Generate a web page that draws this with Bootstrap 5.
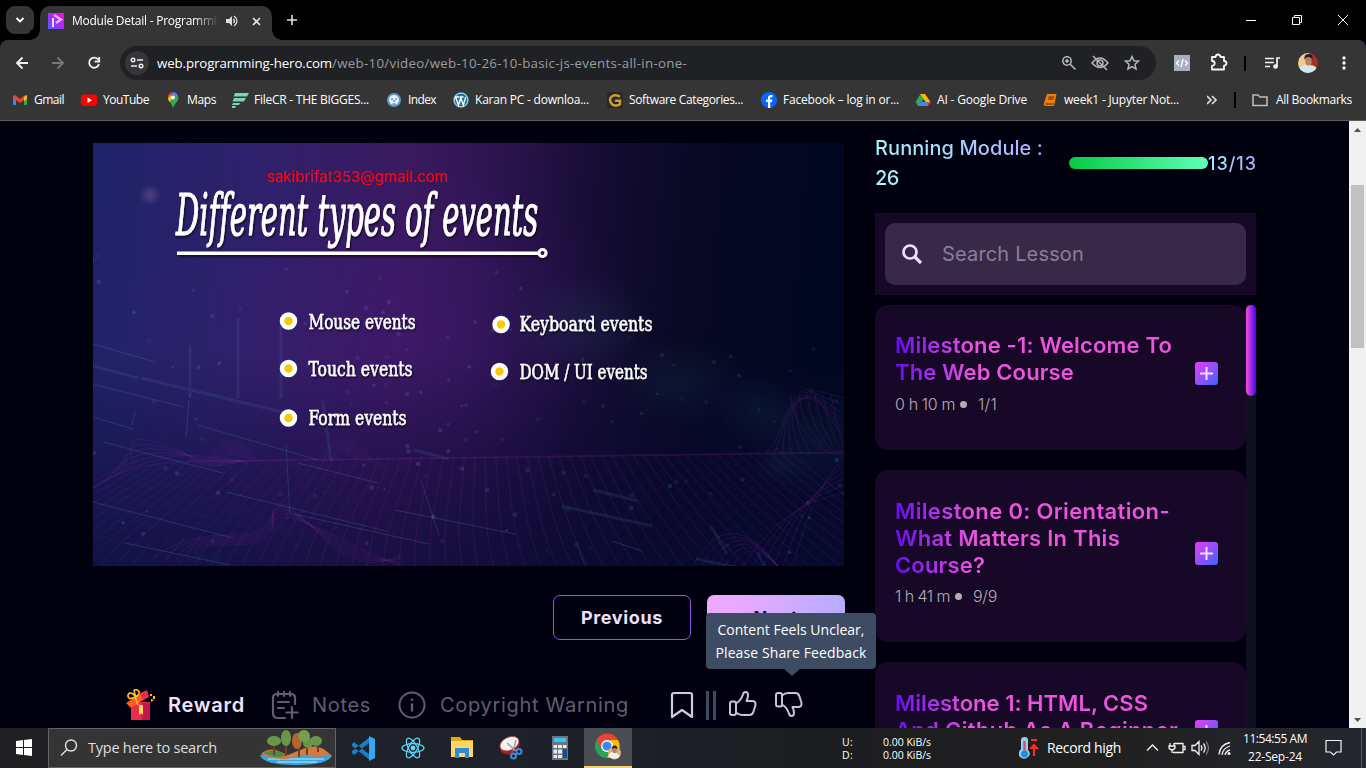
<!DOCTYPE html>
<html lang="en">
<head>
<meta charset="utf-8">
<meta name="viewport" content="width=device-width, initial-scale=1">
<title>Module Detail - Programming Hero</title>
<link href="https://cdn.jsdelivr.net/npm/bootstrap@5.3.0/dist/css/bootstrap.min.css" rel="stylesheet">
<style>
html,body{height:100%;overflow:hidden}
body{background:#00000f;font-family:"Open Sans","Noto Sans",sans-serif;font-size:12px;line-height:16px;color:#fff}
svg{display:block;flex:none}
[data-w]{white-space:nowrap;display:inline-block}
.screen{width:1366px;height:768px}
.tabstrip{height:40px;background:#000}
.tabsearch{width:28px;height:28px;margin:6px 0 0 6px;border-radius:9px;background:#353535}
.tab-on{width:232px;height:34px;margin-top:6px;margin-left:6px;padding-left:8px;background:#353535;border-radius:10px 10px 0 0;position:relative}
.tab-on::before,.tab-on::after{content:"";position:absolute;bottom:0;width:10px;height:10px}
.tab-on::before{left:-10px;background:radial-gradient(circle at 0 0,#000 9.5px,#353535 10px)}
.tab-on::after{right:-10px;background:radial-gradient(circle at 100% 0,#000 9.5px,#353535 10px)}
.tab-label{width:147px;overflow:hidden;white-space:nowrap;-webkit-mask-image:linear-gradient(90deg,#000 83%,transparent)}
.win-ctl{width:46px}
.toolbar{height:46px;background:#353535;border-radius:8px 8px 0 0}
.omnibox{width:1036px;height:34px;border-radius:17px;background:#202124;margin-left:15px}
.site-btn{width:24px;height:24px;border-radius:50%;background:#353638;margin-left:5px}
.url{font-size:13.3px;color:#9b9da0;margin-left:8px}
.url b{font-weight:400;color:#fff}
.bookbar{height:35px;background:#353535;border-bottom:1px solid #5e5e5e;padding-left:12px}
.marks{display:grid;grid-template-columns:69px 84px 67px 154px 67px 154px 154px 154px 127px 157px}
.marks>div{display:flex;align-items:center;gap:6px;height:28px}
.viewport{height:607px;overflow:hidden;background:#00000f}
.page{width:1349px;padding-left:93px;font-family:Inter,"Liberation Sans",sans-serif}
.watch{width:752px;padding-top:22px}
.slide{width:751px;height:423px}
.btn-hero{width:138px;height:45px;border-radius:7px;font-weight:700;font-size:18px;padding:0}
.btn-prev{border:1px solid #9455e8;color:#efe0ff}
.btn-next{background:linear-gradient(90deg,#eaaaff 20%,#b5acff);color:#0b0720;border:0}
.actions{height:34px;margin-top:48px;padding-left:32px;font-size:20px;line-height:30px;color:#655c71}
.actions .on{color:#f0e1ff;font-weight:600}
.tip-wrap{position:relative}
.tip{position:absolute;z-index:5;width:170px;height:56px;left:-68px;top:-77px;background:#3d4b63;border-radius:4px;padding:5px 0;text-align:center;font:14px/23px "Open Sans",sans-serif;color:#fff}
.tip::after{content:"";position:absolute;left:78px;top:56px;border:8px solid transparent;border-top:7px solid #3d4b63;border-bottom:0}
.side{width:381px;margin-left:30px;padding-top:12px}
.ice{background:linear-gradient(90deg,#a4f8fa,#b2acff);-webkit-background-clip:text;background-clip:text;color:transparent}
.module-name{font-size:20px;line-height:30px;width:172px;font-weight:500}
.module-name .short{background-size:168px 100%}
.done-bar{width:139px;height:12px;border-radius:6px;background:linear-gradient(90deg,#05cb41,#5fffb8)}
.count{font-size:18px;line-height:24px;font-weight:500;width:48px;padding-top:2px}
.finder{height:82px;margin-top:20px;padding:10px;background:#170827}
.finder-in{height:62px;border-radius:10px;background:#382949;color:#8b7d98;font-size:20px;padding-left:17px}
.lessons{margin-top:10px;height:500px}
.lessons-list{width:371px;gap:20px}
.mile{background:#170827;border-radius:13px;padding:28px 28px 34px 20px}
.mile:first-child{padding-top:27px}
.mile h3{font-size:22px;line-height:27px;font-weight:600;margin:0;background:linear-gradient(90deg,#650df5,#ee54df 78px);-webkit-background-clip:text;background-clip:text;color:transparent}
.mile h3 span{display:table}
.mile p{font-size:16px;line-height:24px;margin:5px 0 0;font-weight:300;color:#b3adb4}
.mile:first-child p{margin-top:6px}
.mile i{width:7px;height:7px;border-radius:50%;background:#b3adb4;margin:1px 11px 0 5px}
.plus{width:23px;height:23px;border-radius:3px;background:linear-gradient(135deg,#e43df5,#4361ff);margin-bottom:2px}
.track{width:10px;background:#101020}
.track div{height:91px;border-radius:5px;background:linear-gradient(90deg,#f050dd,#5000ee)}
.sb{width:17px;background:#f1f1f1}
.sb div{width:13px;height:163px;background:#c1c1c1;margin:48px 2px 0}
.taskbar{height:40px;background:linear-gradient(90deg,#202022,#1f222c 35%,#1c1d20 60%,#202020 80%,#24272e)}
.tasksearch{width:288px;height:40px;background:#343434;border:1px solid #636363;font-size:14.5px;color:#dedede;padding-left:11px}
.task{width:49px;height:40px}
.task.cur{background:#4b4c51;border-bottom:2px solid #f5d37a;width:48px}
.net{font-size:10.5px;line-height:13px;padding-top:2px}
.clock{font-size:12px;line-height:18px;width:66px;margin-left:6px}
</style>
</head>
<body>
<div class="screen d-flex flex-column">
  <header>
    <div class="tabstrip d-flex">
      <div class="tabsearch d-flex align-items-center justify-content-center"><svg width="10" height="8" viewBox="0 0 10 8" fill="none" stroke="#fff" stroke-width="1.8"><path d="M1.5 2 5 5.5 8.5 2"/></svg></div>
      <div class="tab-on d-flex align-items-center pb-1">
        <svg width="16" height="16" viewBox="0 0 16 16"><defs><linearGradient id="ph" x1="0" y1="1" x2="1" y2="0"><stop stop-color="#5460ff"/><stop offset=".5" stop-color="#a42bff"/><stop offset="1" stop-color="#ff08dd"/></linearGradient></defs><path fill="url(#ph)" d="M0 0h16v16H0z"/><path d="m6 2 7 4.5L8 10" fill="none" stroke="#e8b7ff" stroke-width="2.3"/><path d="M4 5h2v9H4z" fill="#eadcff"/></svg>
        <div class="tab-label ms-2"><span data-w="158">Module Detail - Programming</span></div>
        <svg style="margin-left:7px" width="13" height="12" viewBox="0 0 13 12" fill="none" stroke="#ddd" stroke-width="1.3"><path d="M0 4h3l3-3v10L3 8H0z" fill="#ddd" stroke="none"/><path d="M7.5 4q2 2 0 4M8 1q6 5 0 10"/></svg>
        <svg style="margin-left:13px" width="9" height="9" viewBox="0 0 9 9" stroke="#e4e4e4" stroke-width="1.6"><path d="m1 1 7 7M8 1 1 8"/></svg>
      </div>
      <svg style="margin:15px 0 0 15px" width="11" height="11" viewBox="0 0 11 11" stroke="#e4e4e4" stroke-width="1.6"><path d="M5 0v10M0 5h10"/></svg>
      <div class="ms-auto d-flex align-items-center">
        <div class="win-ctl d-flex justify-content-center"><svg width="10" height="10"><path d="M0 5.5h10" stroke="#fff"/></svg></div>
        <div class="win-ctl d-flex justify-content-center"><svg width="10" height="10" fill="none" stroke="#fff"><path d="M.5 2.5h7v7h-7zM2.500 2V.5h7v7H8"/></svg></div>
        <div class="win-ctl d-flex justify-content-center"><svg width="10" height="10" stroke="#fff"><path d="m0 0 10 10M10 0 0 10"/></svg></div>
      </div>
    </div>
    <div class="toolbar d-flex align-items-center">
      <svg style="margin-left:15px" width="90" height="16" viewBox="0 0 90 16" fill="none" stroke="#f3f3f3" stroke-width="1.8"><path d="M13 8H2M7.5 2.5 2 8l5.500 5.500"/><path stroke="#777" d="M37 8h11M42.500 2.500 48 8l-5.500 5.500"/><path d="M83 4.500A5 5 0 1 0 84 9M84.200 2v4.500h-4.500"/></svg>
      <div class="omnibox d-flex align-items-center">
        <div class="site-btn d-flex align-items-center justify-content-center"><svg width="14" height="14" viewBox="0 0 14 14" fill="none" stroke="#eee" stroke-width="1.4"><circle cx="3" cy="4" r="1.800"/><path d="M7 4h6M1 10h6"/><circle cx="11" cy="10" r="1.800"/></svg></div>
        <div class="url"><b data-w="175">web.programming-hero.com</b><span data-w="355">/web-10/video/web-10-26-10-basic-js-events-all-in-one-</span></div>
        <svg class="ms-auto" style="margin-right:14px" width="80" height="18" viewBox="0 0 80 18" fill="none" stroke="#b5b6b9" stroke-width="1.500"><circle cx="5" cy="7" r="4.200"/><path d="m8 10 5.500 5.500M3 7h4M5 5v4"/><path d="M30 9q8-10 16 0-8 9-16 0ZM31 2l14 14"/><circle cx="38" cy="9" r="3"/><path d="m70 2.500 1.900 4.300 4.600.4-3.500 3.100 1 4.600-4-2.400-4 2.400 1-4.600-3.500-3.100 4.600-.4z"/></svg>
      </div>
      <svg style="margin-left:18px" width="192" height="24" viewBox="0 0 192 24" fill="none"><path fill="#a9b0bf" d="M0 4h16v16H0z"/><path d="M5 9.500 2.500 12 5 14.500M11 9.500l2.500 2.500-2.500 2.500M9 8l-2 8" stroke="#fff" stroke-width="1.300"/><path d="M38 6h3.500q.5-2.500 2.500-2.500T46.500 6H50v4q2.500.3 2.500 2.300T50 14.600V18.500H38V15q2.700-.5 2.700-2.700T38 10z" stroke="#f5f5f5" stroke-width="1.800" stroke-linejoin="round"/><path d="M71 5v15" stroke="#000" stroke-width="2"/><path d="M91 7.500h9M91 11.500h9M91 15.500h5M103 16V7h3" stroke="#f5f5f5" stroke-width="1.700"/><circle cx="101.500" cy="15.500" r="2.300" fill="#f5f5f5"/><clipPath id="av"><circle cx="134" cy="12" r="10"/></clipPath><g clip-path="url(#av)"><path fill="#f1cd91" d="M124 2h12v20h-12z"/><path fill="#aa3024" d="M135 2h10v20h-10z"/><path d="M124 23q0-10 10-9 10-1 10 9z" fill="#d3e6ef"/><ellipse cx="134.500" cy="10" rx="3.200" ry="4.500" fill="#b48266"/><path d="M130.500 9q-1-6 4-6t4 6q-1-3-4-3t-4 3" fill="#211d20"/></g><g fill="#f5f5f5"><circle cx="170" cy="7" r="1.700"/><circle cx="170" cy="12" r="1.700"/><circle cx="170" cy="17" r="1.700"/></g></svg>
    </div>
    <div class="bookbar d-flex">
      <div class="marks">
        <div><svg width="16" height="16" viewBox="0 0 16 16"><path fill="#4285f4" d="M1 4h3v9H2q-1 0-1-1z"/><path fill="#34a853" d="M12 4h3v8q0 1-1 1h-2z"/><path fill="#ea4335" d="m1 4 2-1 5 4 5-4 2 1v2l-7 5-7-5z"/><path fill="#fbbc04" d="M12 5l3-2v4l-3 2z"/></svg><span data-w="30">Gmail</span></div>
        <div><svg width="16" height="16" viewBox="0 0 16 16"><rect y="2.500" width="16" height="11.500" rx="3" fill="#f00"/><path fill="#fff" d="m6.500 5.500 4.500 2.700-4.500 2.700z"/></svg><span data-w="46">YouTube</span></div>
        <div><svg width="16" height="16" viewBox="0 0 16 16"><path fill="#34a853" d="M8 16Q7 12 4 9l7-7q4 3 1.500 7Q9 13 8 16"/><path fill="#4285f4" d="M5 9 13 3q-2-3-5-3L3 6z"/><path fill="#ea4335" d="M3.300 3Q5 .500 8 0l-1 4-3 3q-1.500-2-.7-4"/><path fill="#fbbc04" d="m3 6 3-3 1 4-2.500 3Q3 8.500 3 6"/><circle cx="8" cy="5.500" r="1.900" fill="#fff"/></svg><span data-w="29">Maps</span></div>
        <div><svg width="17" height="16" viewBox="0 0 17 16" fill="#7ed4b3"><path d="M3 1h14l-2 3.500H1.500zM2 6h12l-2 3.500H.500zM1 11h7l-1 2H0zM0 14h4l-1 2H0z"/></svg><span style="margin-left:-1px" data-w="115">FileCR - THE BIGGES...</span></div>
        <div><svg width="16" height="16" viewBox="0 0 16 16"><circle cx="8" cy="8" r="7" fill="#5e9bc7"/><circle cx="8" cy="8" r="5" fill="#dff2ff"/><path d="M5 7h2M9 7h2M8 8v2M6.500 12h3" stroke="#376080"/></svg><span data-w="28">Index</span></div>
        <div><svg width="16" height="16" viewBox="0 0 16 16"><circle cx="8" cy="8" r="8" fill="#21759b"/><circle cx="8" cy="8" r="6.900" fill="none" stroke="#fff" stroke-width=".8"/><path d="m2.500 5 3 8 2.300-7 2.500 7 2.500-8M2 5h4M6.500 5h4" fill="none" stroke="#fff" stroke-width="1.400"/></svg><span data-w="114">Karan PC - downloa...</span></div>
        <div><svg width="16" height="16" viewBox="0 0 16 16"><path fill="#292929" d="M0 0h16v16H0z"/><path d="M13 4.800Q9 2 5.500 4T3.500 10q2 4 6 3.500 3-.3 3.500-1.500V8.800H8" fill="none" stroke="#d2a02a" stroke-width="2.500"/></svg><span data-w="114">Software Categories...</span></div>
        <div><svg width="16" height="16" viewBox="0 0 16 16"><circle cx="8" cy="8" r="8" fill="#0866ff"/><path d="M7 16V10H5V7.500h2V6q0-3 3-3h1.500v2.300H10q-1 0-1 1v1.200h2.400L11 10H9.300v6z" fill="#fff"/></svg><span data-w="116">Facebook – log in or...</span></div>
        <div><svg width="16" height="16" viewBox="0 0 16 16"><path fill="#34a853" d="M5.500 2h2.800L10 5l-5.500 9H3L.5 10z"/><path fill="#fbbc04" d="M5.500 2H10l5.500 8h-5z"/><path fill="#4285f4" d="M4.800 10H15l-2.500 4H3z"/><path fill="#ea4335" d="M11 10h4.500l-2 3z"/></svg><span data-w="90">AI - Google Drive</span></div>
        <div><svg width="16" height="16" viewBox="0 0 16 16"><path d="M5 2h9.500l-2.500 12H3q-2-1-1-3z" fill="#f57c00"/><path d="M6.500 5H12M6 7h5.500M3.500 12h8" stroke="#3b3027"/></svg><span data-w="115">week1 - Jupyter Not...</span></div>
      </div>
      <div class="d-flex align-items-center" style="height:28px"><svg style="margin-left:8px" width="61" height="16" viewBox="0 0 61 16" fill="none" stroke="#e2e2e2" stroke-width="1.600"><path d="m0 4 4 4-4 4M5 4l4 4-4 4"/><path d="M28 0v16" stroke="#000" stroke-width="2"/><path d="M46 3h5l2 2h7v8.500H46z" stroke="#bbb"/></svg><span class="ms-2" data-w="76">All Bookmarks</span></div>
    </div>
  </header>

  <main class="viewport d-flex">
    <div class="page d-flex">
      <section class="watch">
        <svg class="slide" viewBox="0 0 751 423" role="img">
          <defs>
            <linearGradient id="base" x1="0" y1=".1" x2="1" y2=".15"><stop stop-color="#1f2368"/><stop offset=".23" stop-color="#30206b"/><stop offset=".42" stop-color="#3a195f"/><stop offset=".52" stop-color="#2f1552"/><stop offset=".66" stop-color="#170d36"/><stop offset=".8" stop-color="#080824"/><stop offset="1" stop-color="#010720"/></linearGradient>
            <linearGradient id="floor" x1="0" y1="0" x2="0" y2="1"><stop offset=".5" stop-color="#0b0b35" stop-opacity="0"/><stop offset=".78" stop-color="#0c0a36" stop-opacity=".45"/><stop offset="1" stop-color="#080b33" stop-opacity=".68"/></linearGradient>
            <radialGradient id="glow"><stop stop-color="#431878" stop-opacity=".4"/><stop offset="1" stop-color="#431878" stop-opacity="0"/></radialGradient>
            <radialGradient id="teal"><stop stop-color="#1f5562" stop-opacity=".2"/><stop offset="1" stop-color="#1f5562" stop-opacity="0"/></radialGradient>
            <radialGradient id="bokeh"><stop stop-color="#8a72a6" stop-opacity=".42"/><stop offset="1" stop-color="#8a72a6" stop-opacity="0"/></radialGradient>
            <filter id="sh" x="-10%" y="-10%" width="120%" height="130%"><feDropShadow dx="1" dy="1.500" stdDeviation=".8" flood-opacity=".7"/></filter>
          </defs>
          <path fill="url(#base)" d="M0 0h751v423H0z"/>
          <ellipse cx="330" cy="190" rx="220" ry="170" fill="url(#glow)"/>
          <g fill="url(#teal)"><ellipse cx="490" cy="180" rx="75" ry="50"/><ellipse cx="585" cy="240" rx="68" ry="45"/><ellipse cx="665" cy="268" rx="42" ry="36"/><ellipse cx="720" cy="300" rx="65" ry="55"/><ellipse cx="690" cy="322" rx="30" ry="22"/></g>
          <path fill="url(#floor)" d="M0 0h751v423H0z"/>
          <g id="mesh" fill="none" stroke="#8428a0" stroke-width="1" stroke-opacity=".2"></g>
          <g id="dust"></g>
          <g stroke="#4d8dbb" stroke-opacity=".25" fill="none"><path d="m0 201 62 18m-62 22 90 23m-90 10 40 12M10 299l120 31m-25-48L225 317M0 359l140 36m-7-46 160 39M32 400l105 22M201 371l135 30M302 367l120 24M205 320l80 20M96 257l-3 38M42 268l-3 14M193 302l4 70M328 337l18 55M519 398l30 10M484 402l8 20"/><path stroke-width="3" stroke-opacity=".14" d="M45 235 0 223m48 12 154 37M145 255v-80m43 80v-75M230 258l8 60M321 307l35 9M97 252v-50M618 383l16 28m30-2 14 26M500 347l45 11M469 363l90 20M603 416l40 8"/></g>
          <circle cx="57" cy="52" r="11" fill="url(#bokeh)"/>
          <text x="173.500" y="39" textLength="181" lengthAdjust="spacing" font-family="Inter, sans-serif" font-size="15" fill="#f00">sakibrifat353@gmail.com</text>
          <g fill="#fff" stroke="#fff" font-family="DejaVu Serif Condensed, DejaVu Serif, serif" filter="url(#sh)">
            <text transform="translate(83 92) scale(1 1.500)" font-size="38" font-style="italic" textLength="362" lengthAdjust="spacingAndGlyphs" stroke-width=".7" style="font-variant-ligatures:none">Different types of events</text>
            <path stroke="none" d="M84 108.500h361v3.500H84z"/><circle cx="449.500" cy="110" r="3.500" fill="#25134b" stroke-width="3"/>
            <g font-size="21" stroke-width=".45"><text x="215.500" y="186" textLength="107" lengthAdjust="spacingAndGlyphs">Mouse events</text><text x="215.500" y="233" textLength="104" lengthAdjust="spacingAndGlyphs">Touch events</text><text x="215.500" y="282" textLength="98" lengthAdjust="spacingAndGlyphs">Form events</text><text x="426.500" y="188" textLength="133" lengthAdjust="spacingAndGlyphs">Keyboard events</text><text x="426.500" y="236" textLength="128" lengthAdjust="spacingAndGlyphs">DOM / UI events</text></g>
          </g>
          <g fill="#f8ca05" stroke="#fff" stroke-width="4.500"><circle cx="195.500" cy="178" r="6.500"/><circle cx="195.500" cy="225.500" r="6.500"/><circle cx="195.500" cy="275" r="6.500"/><circle cx="408" cy="181.500" r="6.500"/><circle cx="406.500" cy="228.500" r="6.500"/></g>
        </svg>
        <div class="d-flex justify-content-end gap-3" style="margin-top:29px">
          <button class="btn btn-hero btn-prev"><span data-w="82">Previous</span></button>
          <button class="btn btn-hero btn-next"><span data-w="45">Next</span></button>
        </div>
        <div class="actions d-flex align-items-center">
          <svg width="32" height="32" viewBox="0 0 32 32"><path fill="#e92b50" d="M6 13h19v18H6z"/><path fill="#c9144b" d="M17 14h8v17h-8z"/><path fill="#ffd55b" d="M14 16h4v10l-2-2-2 2z"/><path fill="#ff5a24" d="m1 14 17-11 5 5L6 19z"/><path fill="#e92b50" d="m15 4 7-3 2 7-6 3z"/><path d="M10 8Q3 12 3 6q2-5 8 2Q7-1 12 1q5 2-1 7M10 8l3 8" fill="none" stroke="#f9bd2e" stroke-width="1.700"/><path fill="#f9bd2e" d="m26 10 3 1-3 2zM25 5h2v2h-2zM28 7h2v3h-2z"/></svg>
          <span class="on" style="margin-left:11px" data-w="77">Reward</span>
          <svg style="margin-left:25px" width="30" height="30" viewBox="0 0 30 30" fill="none" stroke="#655c71" stroke-width="2.200" stroke-linecap="round"><path d="M25 14V8q0-4-4-4H7Q3 4 3 8v15q0 5 5 5h7M8 2v4M14 2v4M20 2v4M8 12h11M8 18h6M22 17v11M16.500 22.500h11"/></svg>
          <span style="margin-left:12px" data-w="59">Notes</span>
          <svg style="margin-left:27px" width="28" height="28" viewBox="0 0 28 28" fill="none" stroke="#655c71" stroke-width="2"><circle cx="14" cy="14" r="12.500"/><path d="M14 12.500v8M14 7.500v2.200" stroke-width="2.400"/></svg>
          <span style="margin-left:14px" data-w="189">Copyright Warning</span>
          <svg style="margin-left:41px" width="24" height="28" viewBox="0 0 24 28" fill="none" stroke="#d4c8e1" stroke-width="2.200"><path d="M2 4q0-2 2-2h16q2 0 2 2v22l-10-7-10 7z" stroke-linejoin="round"/></svg>
          <svg style="margin-left:12px" width="10" height="30" viewBox="0 0 10 30" fill="#3d4b63"><path d="M0 1h3v29H0zM7 1h3v29H7z"/></svg>
          <svg style="margin-left:12px" width="30" height="30" viewBox="0 0 30 30" fill="none" stroke="#cdbfdd" stroke-width="2" stroke-linejoin="round"><path id="thumb" d="M6 11.500H4q-2 0-2 2V23q0 2 2 2h2q2 0 2-2v-9.500q0-2-2-2ZM8 13.500q5-3 7-9Q15.500 2 17.500 2 20 2 20 5q0 3-1.500 6H24q4 0 3.500 4l-2 6.500q-1 3.500-4 3.500H14q-3 0-6-2.500"/></svg>
          <div class="tip-wrap" style="margin-left:16px">
            <svg width="30" height="30" viewBox="0 0 30 30" fill="none" stroke="#cdbfdd" stroke-width="2" stroke-linejoin="round"><use href="#thumb" transform="matrix(1 0 0 -1 0 28)"/></svg>
            <div class="tip"><div><span data-w="147">Content Feels Unclear,</span></div><div><span data-w="151">Please Share Feedback</span></div></div>
          </div>
        </div>
      </section>

      <aside class="side">
        <div class="d-flex align-items-center">
          <div class="module-name"><span class="ice" data-w="168">Running Module :</span><br><span class="ice short" data-w="24">26</span></div>
          <div class="done-bar ms-auto"></div>
          <div class="count ice"><span data-w="49">13/13</span></div>
        </div>
        <div class="finder"><div class="finder-in d-flex align-items-center"><svg width="20" height="20" viewBox="0 0 20 20" fill="none" stroke="#f0dcff" stroke-width="2.700"><circle cx="8" cy="8" r="6.500"/><path d="m13 13 6 6" stroke-width="3.300"/></svg><span style="margin-left:20px" data-w="142">Search Lesson</span></div></div>
        <div class="lessons d-flex">
          <div class="lessons-list d-flex flex-column">
            <article class="mile d-flex align-items-center justify-content-between"><div><h3><span data-w="277">Milestone -1: Welcome To</span><span data-w="179">The Web Course</span></h3><p class="d-flex align-items-center"><span data-w="60">0 h 10 m</span><i></i><span data-w="19">1/1</span></p></div><div class="plus"><svg width="23" height="23" stroke="#f1ddff" stroke-width="2"><path d="M11.500 5v13M5 11.500h13"/></svg></div></article>
            <article class="mile d-flex align-items-center justify-content-between"><div><h3><span data-w="275">Milestone 0: Orientation-</span><span data-w="225">What Matters In This</span><span data-w="90">Course?</span></h3><p class="d-flex align-items-center"><span data-w="55">1 h 41 m</span><i></i><span data-w="24">9/9</span></p></div><div class="plus mb-0"><svg width="23" height="23" stroke="#f1ddff" stroke-width="2"><path d="M11.500 5v13M5 11.500h13"/></svg></div></article>
            <article class="mile d-flex align-items-center justify-content-between"><h3 class="pb-4"><span data-w="253">Milestone 1: HTML, CSS</span><span data-w="283">And Github As A Beginner</span></h3><div class="plus mt-1 mb-0"><svg width="23" height="23" stroke="#f1ddff" stroke-width="2"><path d="M11.500 5v13M5 11.500h13"/></svg></div></article>
          </div>
          <div class="track"><div></div></div>
        </div>
      </aside>
    </div>
    <div class="sb d-flex flex-column"><svg width="17" height="16"><path d="m5 11 3.500-4 3.500 4z" fill="#505050"/></svg><div></div><svg class="mt-auto" width="17" height="17"><path d="m5 7 3.500 4L12 7z" fill="#505050"/></svg></div>
  </main>

  <footer class="taskbar d-flex align-items-center">
    <svg width="48" height="40"><path fill="#fff" d="M16 13l7-1v7h-7zM24 12l8-1v8h-8zM16 20h7v7l-7-1zM24 20h8v8l-8-1z"/></svg>
    <div class="tasksearch d-flex align-items-center">
      <svg width="18" height="18" fill="none" stroke="#e2e2e2" stroke-width="1.400"><circle cx="11" cy="6.500" r="5.500"/><path d="m7 10.500-6 6"/></svg>
      <span style="margin-left:10px" data-w="129">Type here to search</span>
      <svg class="ms-auto" style="margin-right:3px" width="72" height="38" viewBox="0 0 72 38"><path d="M0 26h72q-3 10-36 10T0 26" fill="#3ba4dd"/><path d="M8 30h56M17 33h40" stroke="#8ad5f5" stroke-width="1.500"/><path d="M1 25q6-6 15-4l12 5 17-7q12-4 20 2l6 5q-13 3-23 1t-20 3Q12 31 1 25" fill="#d57a3f"/><path d="M3 24q9-6 25 2l-7 2q-9 1-18-4" fill="#508a45"/><path d="M14 12v14M26 8v19M39 8v20M47 12v14M58 13v10" stroke="#733d21" stroke-width="2"/><g fill="#68964b"><ellipse cx="14" cy="12" rx="7" ry="5"/><ellipse cx="26" cy="9" rx="5" ry="8"/><ellipse cx="48" cy="14" rx="5" ry="5"/><ellipse cx="56" cy="12" rx="6" ry="5"/></g><ellipse cx="37" cy="12" rx="5" ry="8" fill="#b76232"/><ellipse cx="44" cy="7" rx="6" ry="6" fill="#7a9d4a"/></svg>
    </div>
    <div class="d-flex" style="margin-left:3px">
      <div class="task d-flex align-items-center justify-content-center"><svg width="25" height="25" viewBox="0 0 25 25"><path d="m1 8 2-2 16 13v5L1 10zM1 17l2 2L19 6V1L1 15z" fill="#1680c9"/><path d="m18 0 6 3v19l-6 3z" fill="#32a9f0"/></svg></div>
      <div class="task d-flex align-items-center justify-content-center"><svg width="24" height="24" viewBox="0 0 24 24" fill="none" stroke="#61dafb" stroke-width="1.200"><circle cx="12" cy="12" r="1.800" fill="#61dafb"/><ellipse cx="12" cy="12" rx="11" ry="4.300"/><ellipse cx="12" cy="12" rx="11" ry="4.300" transform="rotate(60 12 12)"/><ellipse cx="12" cy="12" rx="11" ry="4.300" transform="rotate(120 12 12)"/></svg></div>
      <div class="task d-flex align-items-center justify-content-center"><svg width="22" height="22" viewBox="0 0 22 22"><path fill="#e9a518" d="M0 0h9l2 3h11v17H0z"/><path fill="#ffd766" d="M0 4h22v16H0z"/><path fill="#2f8bd8" d="M4 11h14v10h-4v-5H8v5H4z"/></svg></div>
      <div class="task d-flex align-items-center justify-content-center"><svg width="24" height="24" viewBox="0 0 24 24"><g transform="rotate(-25 10 9)"><ellipse cx="10" cy="11" rx="10" ry="7" fill="#a51f26"/><ellipse cx="11" cy="8" rx="10" ry="6.500" fill="#f4f4f4" stroke="#c9302f" stroke-width=".7"/></g><path d="m8 7 9 8M17 4l-3 11" stroke="#999" stroke-width="1.300"/><circle cx="14.500" cy="20" r="2.500" fill="none" stroke="#388fd9" stroke-width="2"/><circle cx="20" cy="15.500" r="2.500" fill="none" stroke="#388fd9" stroke-width="2"/></svg></div>
      <div class="task d-flex align-items-center justify-content-center"><svg width="18" height="24" viewBox="0 0 18 24"><path fill="#697580" d="M1 0h16v24H1z"/><path fill="#3ec4ec" d="M3 2h12v4H3z"/><path fill="#e7edf2" d="M2.500 9h3.500v3H2.500zM7 9h4v3H7zM12 9h3.500v3H12zM2.500 13.500H6v4H2.500zM7 13.500h4v4H7zM2.500 19H6v3H2.500zM7 19h4v3H7z"/><path fill="#164c94" d="M12 13h4v9h-4z"/></svg></div>
      <div class="task cur d-flex align-items-center justify-content-center"><svg width="28" height="28" viewBox="0 0 28 28"><circle cx="13" cy="13" r="12" fill="#24a653"/><path d="M2.600 7A12 12 0 0 1 24 7H13z" fill="#e94335"/><path d="M2.500 7 8 17l5-10z" fill="#e94335"/><path d="M24 7a12 12 0 0 1-11 18l6-10-3-8z" fill="#fbbc05"/><circle cx="13" cy="13" r="6" fill="#fff"/><circle cx="13" cy="13" r="4.600" fill="#4285f4"/><circle cx="20.500" cy="20" r="6.500" fill="#d8af7e"/><path d="M14 23q3-5 6-4t6 4q-5 6-12 0" fill="#e9f4fa"/><ellipse cx="20.500" cy="17" rx="2.300" ry="3.300" fill="#b98163"/><path d="M18 16q0-4 3-3.500t2 3.500q-3-2-5 0" fill="#291c1b"/></svg></div>
    </div>
    <div class="net d-flex" style="margin-left:210px"><div><span data-w="11">U:</span><br><span data-w="11">D:</span></div><div style="margin-left:30px"><span data-w="48">0.00 KiB/s</span><br><span data-w="48">0.00 KiB/s</span></div></div>
    <svg style="margin-left:88px" width="20" height="24" viewBox="0 0 20 24"><path d="M2 4q0-3 3.500-3T9 4v10q3 3 1 6-4 5-9 1-3-4 1-8z" fill="#97cdf1"/><path d="M5.500 5v13" stroke="#d95363" stroke-width="2.500"/><circle cx="5.500" cy="18" r="3.500" fill="#238bdf"/><path d="M12 4h6M15 20V10M12.500 12l2.500-3 2.500 3z" stroke="#f5301c" stroke-width="2.200" fill="#f5301c"/></svg>
    <span style="font-size:14px;margin-left:8px" data-w="74">Record high</span>
    <svg style="margin-left:25px" width="90" height="22" viewBox="0 0 90 22" fill="none" stroke="#f2f2f2" stroke-width="1.300"><path d="m1 13.500 5.500-5.500L12 13.500"/><path d="M28 6.500h9v9H27M24 6v3M28 6v3M23 9h6v2q-3 4-6 0zM26 13v3M37.500 9.500H39v3h-1.500"/><path d="M46 8.500h3l4-4v13l-4-4h-3zM55 8.500q2 2.500 0 5M57.500 6.500q3.500 4.500 0 9"/><path d="M60 4.500q5 6.500 0 13" stroke="#777"/><path d="M73 17.500q1-10 11-12M76 18q1-7 8-9M79 18q1-4 5-5"/><circle cx="83" cy="16.500" r="1.500" fill="#f2f2f2" stroke="none"/></svg>
    <div class="clock text-center"><span data-w="64">11:54:55 AM</span><br><span data-w="54">22-Sep-24</span></div>
    <svg style="margin-left:17px" width="18" height="18" fill="none" stroke="#f2f2f2" stroke-width="1.200"><path d="M1 1.500h15v11.500h-4.500L8.500 16l-3-3H1z"/></svg>
    <div class="ms-auto me-1" style="width:1px;height:40px;background:#555"></div>
  </footer>
</div>
<script src="https://cdn.jsdelivr.net/npm/bootstrap@5.3.0/dist/js/bootstrap.bundle.min.js"></script>
<script>
document.querySelectorAll('[data-w]').forEach(el => {
  const gap = (+el.dataset.w - el.getBoundingClientRect().width) / el.textContent.length;
  el.style.letterSpacing = gap.toFixed(3) + 'px';
});
// Perspective wireframe of the slide backdrop.
const ns = 'http://www.w3.org/2000/svg';
const line = d => { const p = document.createElementNS(ns, 'path'); p.setAttribute('d', d); document.getElementById('mesh').append(p); };
line('M0 345Q40 316 120 318L751 309');
line('M90 319L751 310');
for (let i = 0; i < 64; i++) {
  const x = 35 + i * 10.500, e = 375 + (x - 375) * 1.500;
  const hill = 10 * Math.exp(-Math.pow((x - 250) / 18, 2)) + 8 * Math.exp(-Math.pow((x - 140) / 20, 2));
  line(`M${x} ${318 - x * .013 - hill}C${x + (e - x) * .3} 350 ${x + (e - x) * .6 - 8} 375 ${e} 423`);
}
for (let i = 0; i < 6; i++) {
  line(`M${60 + i * 12} ${415 + i}Q90 ${392 + i * 2} 135 ${392 + i * 2}T180 ${368 + i * 3}T225 ${390 - i}T310 ${410 + i * 3}`);
  line(`M${0 + i * 8} ${345 - i * 5}Q30 ${325 - i * 7} 60 ${318 - i * 4}T100 ${312 + i}T150 318`);
  line(`M${115 + i * 4} 318Q135 ${278 + i * 5} ${165 - i * 2} 318`);
  line(`M${225 + i * 4} 318Q250 ${276 + i * 5} ${280 - i * 3} 318`);
  line(`M${600 + i * 8} 423Q${635 + i * 4} ${358 + i * 7} 685 423`);
  line(`M${672 + i * 9} 310C690 ${300 - i * 8} ${692 + i * 3} 246 ${718 + i * 2} ${246 + i * 3}T751 ${255 + i * 8}`);
  line(`M${698 + i * 8} 252Q${700 + i * 9} 290 ${740 + i * 3} ${312 + i}`);
  line(`M${650 + i * 10} 423Q${690 + i * 6} ${360 - i * 3} 751 ${350 - i * 7}`);
}
let seed = 11;
const rnd = () => (seed = seed * 16807 % 2147483647) / 2147483647;
for (let i = 0; i < 150; i++) {
  const c = document.createElementNS(ns, 'circle');
  const x = rnd() * 751, y = 110 + rnd() * 300;
  if (x > 430 && y < 190) continue;
  c.setAttribute('cx', x); c.setAttribute('cy', y); c.setAttribute('r', 1.200 + rnd() * 1.300);
  c.setAttribute('fill', x < 420 ? '#5d73c5' : '#2e8292'); c.setAttribute('opacity', .1 + rnd() * .2);
  document.getElementById('dust').append(c);
}
</script>
</body>
</html>
